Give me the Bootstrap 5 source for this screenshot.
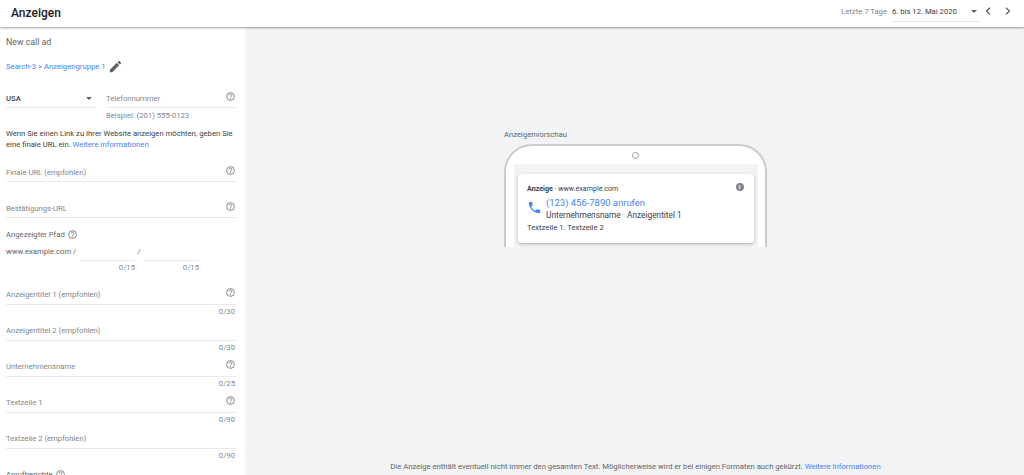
<!DOCTYPE html>
<html lang="de">
<head>
<meta charset="utf-8">
<title>Anzeigen</title>
<link href="https://cdn.jsdelivr.net/npm/bootstrap@5.3.0/dist/css/bootstrap.min.css" rel="stylesheet">
<style>
html,body{height:475px;overflow:hidden}
body{font-family:Roboto,"Liberation Sans",sans-serif;font-size:7.7px;line-height:11px;color:#3c4043;background:#f1f3f4}
a{color:#4285f4;text-decoration:none}
.topbar{height:27px;background:#fff;box-shadow:0 1px 2px rgba(60,64,67,.5);position:relative;z-index:2;padding:0 13px 0 11px}
.page-title{font-size:12px;font-weight:500;color:#202124;line-height:27px}
.range-label{color:#80868b;margin-right:5px}
.range-box{width:88px;height:22px;border-bottom:1px solid #e4e6e8;color:#3c4043;padding:6px 3px 0 0}
.caret{width:0;height:0;border-left:3px solid transparent;border-right:3px solid transparent;border-top:3px solid currentColor;color:#5f6368}
.chev-l{margin-left:5px}
.chev-r{margin-left:14px}
.shell{height:448px}
.side{width:245px;flex:none;height:448px;overflow:hidden;background:#fff;padding:0 0 0 6px;position:relative}
.inner{width:230px}
.call-title{font-size:8.8px;color:#5f6368;margin-top:9px;line-height:12px}
.crumb{margin-top:9px;height:18px}
.crumb svg{margin-left:2px}
.q{flex:none;display:block}
.q-up{margin-top:-1px}
.phone-row{margin-top:15px}
.fld{height:18px;border-bottom:1px solid #e8eaed;color:#80868b;padding-top:3px}
.fld-phone{margin-left:10px;padding-right:1px}
.country{width:90px;flex:none;color:#3c4043;font-weight:500;padding-right:4px}
.hint{color:#80868b;margin:1.5px 0 0 100px}
.info{margin-top:7px;color:#3c4043;width:232px}
.tf{height:16px;border-bottom:1px solid #e8eaed;color:#80868b;padding-right:1px}
.first-f{margin-top:17px;height:15px}
.next-f{margin-top:21px;height:15px}
.path-label{margin-top:10px;color:#5f6368;height:14px}
.path-label svg{margin-left:3px}
.path{color:#5f6368;margin-top:4px;height:15px}
.path-in{width:55px;height:15px;border-bottom:1px solid #e8eaed;margin-left:4px}
.slash2{margin-left:2px}
.cnts{color:#80868b;margin-top:1px;height:11px}
.cnt-a{width:129px;text-align:right}
.cnt-b{width:64px;text-align:right}
.t-group{margin-top:16px}
.cnt{color:#80868b;text-align:right;height:11px;margin-top:1px;padding-right:1px}
.tgap{margin-top:8px}
.last-label{margin-top:7px}
.main-area{min-width:0;padding-top:102px}
.prev-wrap{width:263px;margin-left:259px}
.prev-label{color:#5f6368;height:11px;margin-bottom:4px}
.clip{height:103px;overflow:hidden}
.phone{height:180px;background:#fff;border:2.5px solid #ccc;border-radius:28px;padding:0 7.5px}
.cam{width:7px;height:7px;border:1px solid #9aa0a6;border-radius:50%;margin:6px auto 4.5px}
.screen{background:#f1f3f4;height:160px;padding:10px 4px}
.adcard{background:#fff;border-radius:3px;box-shadow:0 1px 3px rgba(60,64,67,.4);height:69px;padding:9.5px 10px 0 9.5px;color:#3c4043}
.ad-top{height:14px;font-size:7.1px}
.ad-info{width:8px;height:8px;background:#80868b;border-radius:50%;color:#fff;font-size:6px;line-height:8px;text-align:center;font-weight:700}
.ad-phone{font-size:9.45px;color:#4285f4;line-height:12px}
.ad-sub{font-size:8.3px;line-height:12px;color:#3c4043}
.ad-ph-ic{margin-right:4px;margin-top:3px}
.ad-body{margin-top:1px;font-size:7.7px}
.foot{margin-top:213.5px;text-align:center;color:#5f6368;padding-left:2px}
</style>
</head>
<body>
<header class="topbar d-flex align-items-start justify-content-between">
  <div class="page-title">Anzeigen</div>
  <div class="d-flex align-items-center">
    <span class="range-label">Letzte 7 Tage</span>
    <div class="range-box d-flex justify-content-between"><span>6. bis 12. Mai 2020</span><span class="caret mt-1"></span></div>
    <svg width="6" height="8" viewBox="0 0 6 8" class="q chev-l" aria-hidden="true"><path d="M5 .7 1.500 4 5 7.300" fill="none" stroke="#5f6368" stroke-width="1.300"/></svg>
    <svg width="6" height="8" viewBox="0 0 6 8" class="q chev-r" aria-hidden="true"><path d="M1 .7 4.500 4 1 7.300" fill="none" stroke="#5f6368" stroke-width="1.300"/></svg>
  </div>
</header>
<div class="shell d-flex">
  <aside class="side">
    <div class="inner">
      <div class="call-title">New call ad</div>
      <div class="crumb d-flex align-items-center">
        <a href="#">Search-3 &gt; Anzeigengruppe 1</a>
        <svg width="15" height="15" viewBox="0 0 24 24" class="q" aria-hidden="true"><path fill="#5f6368" d="M3 17.250V21h3.750L17.810 9.940l-3.750-3.750L3 17.250zM20.710 7.040a1 1 0 0 0 0-1.410l-2.340-2.340a1 1 0 0 0-1.410 0l-1.830 1.830 3.750 3.750 1.830-1.830z"/></svg>
      </div>
      <div class="d-flex phone-row">
        <div class="country fld d-flex justify-content-between align-items-start"><span>USA</span><span class="caret mt-1"></span></div>
        <div class="fld fld-phone flex-grow-1 d-flex justify-content-between"><span>Telefonnummer</span>
          <svg width="9" height="9" viewBox="0 0 18 18" class="q q-up" aria-hidden="true"><use href="#help"/></svg></div>
      </div>
      <div class="hint">Beispiel: (201) 555-0123</div>
      <p class="info mb-0">Wenn Sie einen Link zu Ihrer Website anzeigen möchten, geben Sie eine finale URL ein. <a href="#">Weitere Informationen</a></p>

      <div class="tf d-flex justify-content-between first-f"><span>Finale URL (empfohlen)</span><svg width="9" height="9" viewBox="0 0 18 18" class="q q-up" aria-hidden="true"><use href="#help"/></svg></div>
      <div class="tf d-flex justify-content-between next-f"><span>Bestätigungs-URL</span><svg width="9" height="9" viewBox="0 0 18 18" class="q q-up" aria-hidden="true"><use href="#help"/></svg></div>

      <div class="path-label d-flex align-items-center">Angezeigter Pfad<svg width="9" height="9" viewBox="0 0 18 18" class="q q-up" aria-hidden="true"><use href="#help"/></svg></div>
      <div class="path d-flex">www.example.com /<span class="path-in"></span><span class="slash2">/</span><span class="path-in"></span></div>
      <div class="cnts d-flex"><div class="cnt-a">0/15</div><div class="cnt-b">0/15</div></div>

      <div class="t-group">
        <div class="tf d-flex justify-content-between"><span>Anzeigentitel 1 (empfohlen)</span><svg width="9" height="9" viewBox="0 0 18 18" class="q q-up" aria-hidden="true"><use href="#help"/></svg></div>
        <div class="cnt">0/30</div>
        <div class="tf d-flex justify-content-between tgap"><span>Anzeigentitel 2 (empfohlen)</span></div>
        <div class="cnt">0/30</div>
        <div class="tf d-flex justify-content-between tgap"><span>Unternehmensname</span><svg width="9" height="9" viewBox="0 0 18 18" class="q q-up" aria-hidden="true"><use href="#help"/></svg></div>
        <div class="cnt">0/25</div>
        <div class="tf d-flex justify-content-between tgap"><span>Textzeile 1</span><svg width="9" height="9" viewBox="0 0 18 18" class="q q-up" aria-hidden="true"><use href="#help"/></svg></div>
        <div class="cnt">0/90</div>
        <div class="tf d-flex justify-content-between tgap"><span>Textzeile 2 (empfohlen)</span></div>
        <div class="cnt">0/90</div>
      </div>
      <div class="path-label last-label d-flex align-items-center">Anrufberichte<svg width="9" height="9" viewBox="0 0 18 18" class="q" aria-hidden="true"><use href="#help"/></svg></div>
    </div>
  </aside>
  <main class="main-area flex-grow-1">
    <div class="prev-wrap">
      <div class="prev-label">Anzeigenvorschau</div>
      <div class="clip">
        <div class="phone">
          <div class="cam"></div>
          <div class="screen">
            <div class="adcard">
              <div class="ad-top d-flex justify-content-between"><span><b class="fw-bold">Anzeige</b> · www.example.com</span><span class="ad-info">i</span></div>
              <div class="d-flex align-items-start">
                <svg width="15" height="15" viewBox="0 0 24 24" class="q ad-ph-ic" aria-hidden="true"><path fill="#4285f4" d="M6.620 10.790c1.440 2.830 3.760 5.140 6.590 6.590l2.200-2.200c.27-.27.670-.36 1.020-.24 1.120.37 2.330.57 3.570.57.550 0 1 .45 1 1V20c0 .550-.45 1-1 1C10.610 21 3 13.390 3 4c0-.550.450-1 1-1h3.500c.550 0 1 .45 1 1 0 1.250.2 2.450.57 3.570.11.350.03.740-.25 1.020l-2.200 2.200z"/></svg>
                <div><div class="ad-phone">(123) 456-7890 anrufen</div><div class="ad-sub">Unternehmensname · Anzeigentitel 1</div></div>
              </div>
              <div class="ad-body">Textzeile 1. Textzeile 2</div>
            </div>
          </div>
        </div>
      </div>
    </div>
    <div class="foot">Die Anzeige enthält eventuell nicht immer den gesamten Text. Möglicherweise wird er bei einigen Formaten auch gekürzt. <a href="#">Weitere Informationen</a></div>
  </main>
</div>
<svg width="0" height="0" class="position-absolute" aria-hidden="true"><defs><g id="help"><circle cx="9" cy="9" r="7.800" fill="none" stroke="#5f6368" stroke-width="1.500"/><path d="M6.300 7a2.700 2.700 0 1 1 4.200 2.300C9.500 10 9 10.500 9 11.500" fill="none" stroke="#5f6368" stroke-width="1.500"/><circle cx="9" cy="13.500" r="1" fill="#5f6368"/></g></defs></svg>
<script src="https://cdn.jsdelivr.net/npm/bootstrap@5.3.0/dist/js/bootstrap.bundle.min.js"></script>
</body>
</html>
